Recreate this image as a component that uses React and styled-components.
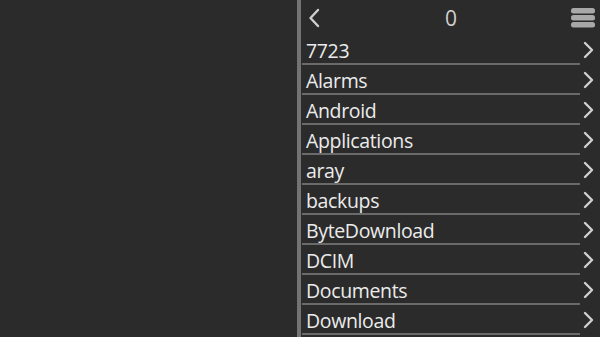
import React from "react";
import styled, { createGlobalStyle } from "styled-components";

const bg = "#2b2b2b";
const textColor = "#ebebeb";
const lineColor = "#6a6a6a";

const Global = createGlobalStyle`
  html, body {
    margin: 0;
    padding: 0;
    background: ${bg};
    overflow: hidden;
  }
`;

const Screen = styled.div`
  display: flex;
  width: 600px;
  height: 337px;
  background: ${bg};
  font-family: "Open Sans", "Noto Sans", sans-serif;
  color: ${textColor};
  overflow: hidden;
`;

const Blank = styled.div`
  width: 297px;
  flex-shrink: 0;
`;

const Splitter = styled.div`
  width: 4px;
  flex-shrink: 0;
  background: #737373;
`;

const Browser = styled.div`
  flex: 1;
  display: flex;
  flex-direction: column;
`;

const Header = styled.div`
  height: 35px;
  display: flex;
  align-items: center;
  justify-content: space-between;
  padding: 0 5px 0 6px;
  flex-shrink: 0;
`;

const Count = styled.div`
  font-size: 21px;
  color: #d0d0d0;
  margin-left: 10px;
  padding-top: 1px;
`;

const Row = styled.div`
  height: 30px;
  box-sizing: border-box;
  display: flex;
  align-items: center;
  justify-content: space-between;
  padding: 0 5px 0 5px;
  position: relative;
  flex-shrink: 0;
  &::after {
    content: "";
    position: absolute;
    left: 1px;
    right: 20px;
    bottom: 0;
    height: 2px;
    background: ${lineColor};
  }
`;

const Name = styled.div`
  font-size: 19.5px;
  line-height: 28px;
  padding-top: 2px;
  letter-spacing: -0.35px;
`;

const Chevron = ({ left }) =>
  left ? (
    <svg width="14" height="20" viewBox="0 0 14 20">
      <path
        d="M11 2 L3.5 10 L11 18"
        fill="none"
        stroke="#cfcfcf"
        strokeWidth="2.4"
        strokeLinecap="round"
        strokeLinejoin="round"
      />
    </svg>
  ) : (
    <svg width="13" height="18" viewBox="0 0 13 18">
      <path
        d="M3 2 L10 9 L3 16"
        fill="none"
        stroke="#cfcfcf"
        strokeWidth="2.4"
        strokeLinecap="round"
        strokeLinejoin="round"
      />
    </svg>
  );

const Menu = () => (
  <svg width="24" height="20" viewBox="0 0 24 20">
    <rect x="0" y="0" width="24" height="5.5" rx="2.5" fill="#a8a8a8" />
    <rect x="0" y="7" width="24" height="5.5" rx="2.5" fill="#a8a8a8" />
    <rect x="0" y="14" width="24" height="5.5" rx="2.5" fill="#a8a8a8" />
  </svg>
);

const folders = [
  "7723",
  "Alarms",
  "Android",
  "Applications",
  "aray",
  "backups",
  "ByteDownload",
  "DCIM",
  "Documents",
  "Download",
];

export default function App() {
  return (
    <>
      <Global />
      <Screen>
        <Blank />
        <Splitter />
        <Browser>
          <Header>
            <Chevron left />
            <Count>0</Count>
            <Menu />
          </Header>
          {folders.map((f) => (
            <Row key={f}>
              <Name>{f}</Name>
              <Chevron />
            </Row>
          ))}
        </Browser>
      </Screen>
    </>
  );
}
